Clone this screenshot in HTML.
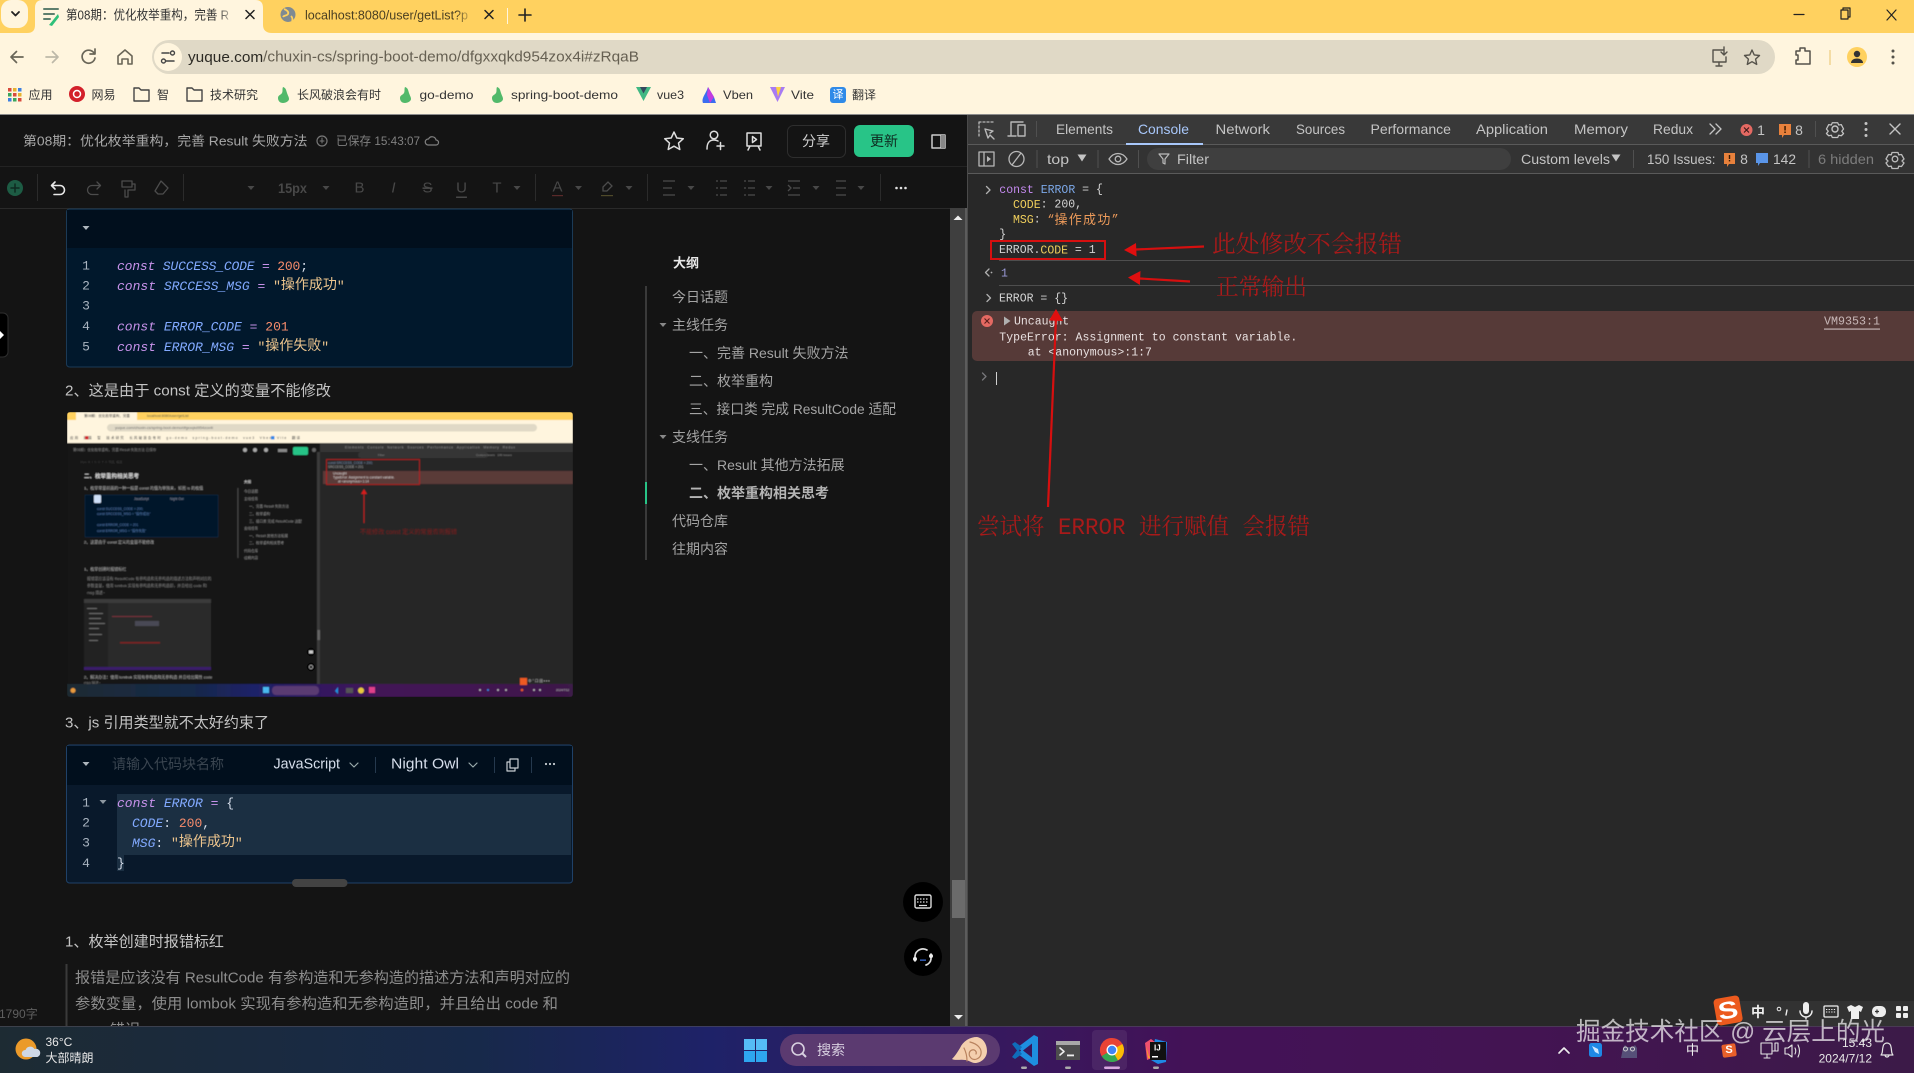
<!DOCTYPE html>
<html><head><meta charset="utf-8"><title>Yuque</title>
<style>
html,body{margin:0;padding:0;background:#141414;overflow:hidden}
svg{display:block;position:absolute;left:0;top:0}
text{dominant-baseline:central;font-family:"Liberation Sans","Noto Sans CJK SC",sans-serif;white-space:pre}
.m text,text.m{font-family:"Liberation Mono","Noto Sans CJK SC",monospace}
.i{fill:none;stroke-linecap:round;stroke-linejoin:round}
.tb{stroke:#4c4c4c;fill:none;stroke-width:1.3}
.k{font-style:italic}
</style></head><body>
<svg width="1914" height="1073" viewBox="0 0 1914 1073" xmlns="http://www.w3.org/2000/svg">
<defs>
<linearGradient id="tbg" x1="0" x2="1" y1="0" y2="0">
<stop offset="0" stop-color="#1d2b33"/><stop offset=".25" stop-color="#17294a"/><stop offset=".37" stop-color="#1e2268"/><stop offset=".46" stop-color="#2e1c62"/><stop offset=".62" stop-color="#431257"/><stop offset=".8" stop-color="#431452"/><stop offset="1" stop-color="#3c1a48"/>
</linearGradient>
<linearGradient id="fade1"><stop offset="0" stop-color="#fff5de" stop-opacity="0"/><stop offset="1" stop-color="#fff5de"/></linearGradient>
<linearGradient id="fade2"><stop offset="0" stop-color="#ffd15f" stop-opacity="0"/><stop offset="1" stop-color="#ffd15f"/></linearGradient>
<filter id="soft" x="0" y="0" width="100%" height="100%"><feGaussianBlur stdDeviation=".4"/></filter>
<path id="c" d="M-3.5 -2h7l-3.500 4z"/>
<path id="c2" d="M-4.500 -3.500h9l-4.500 7z"/>
<clipPath id="mini"><rect x="67" y="412" width="506" height="285" rx="3"/></clipPath>
<clipPath id="left"><rect x="0" y="208" width="950" height="818"/></clipPath>
</defs>

<!-- chrome top -->
<rect width="1914" height="33" fill="#ffd15f"/>
<rect y="33" width="1914" height="82" fill="#fff5de"/>
<rect x="1" y="0" width="27" height="28" rx="10" fill="#fff5de"/>
<path class="i" stroke="#222" stroke-width="1.800" d="M12 12l3.500 3.500 3.500-3.500"/>
<path d="M27 33c6 0 8-3 8-8V8c0-6 3-8 8-8h212c6 0 8 3 8 8v17c0 5 3 8 9 8z" fill="#fff5de"/>
<path class="i" stroke="#5e7f6e" stroke-width="2" d="M44 9h14M44 14h10M44 19h6"/><path d="M49 25l9-11 1 3-7 9z" fill="#2fc07a"/>
<text x="66" y="15" font-size="13" fill="#333" textLength="163" lengthAdjust="spacingAndGlyphs">第08期：优化枚举重构，完善 R</text>
<rect x="218" y="3" width="18" height="26" fill="url(#fade1)"/>
<path class="i" stroke="#222" stroke-width="1.500" d="M246 10.500l8 8M254 10.500l-8 8"/>
<circle cx="288" cy="14.500" r="7.500" fill="#7f8a92"/><path d="M284 9c3 1 5 3 4 5s-4 1-5 3M291 16c1 1 2 3 1 5" stroke="#ffd15f" fill="none" stroke-width="1.800"/>
<text x="305" y="15" font-size="13" fill="#4a3f22" textLength="163" lengthAdjust="spacingAndGlyphs">localhost:8080/user/getList?p</text>
<rect x="456" y="3" width="18" height="26" fill="url(#fade2)"/>
<path class="i" stroke="#222" stroke-width="1.500" d="M485 10.500l8 8M493 10.500l-8 8"/>
<rect x="507" y="8" width="1" height="16" fill="#fff5de"/>
<path class="i" stroke="#222" stroke-width="1.600" d="M525 9v12M519 15h12"/>
<path class="i" stroke="#222" stroke-width="1.200" d="M1794 14.500h10"/>
<path class="i" stroke="#222" stroke-width="1.200" d="M1841 10h7v9h-7zM1843 10V8h7v9h-2"/>
<path class="i" stroke="#222" stroke-width="1.200" d="M1887 10l9 10M1896 10l-9 10"/>

<path class="i" stroke="#6a6658" stroke-width="1.700" d="M23 57H11M16.500 51.500L11 57l5.500 5.500"/>
<path class="i" stroke="#bdb8a8" stroke-width="1.700" d="M46 57h12M52.500 51.500L58 57l-5.500 5.500"/>
<path class="i" stroke="#6a6658" stroke-width="1.700" d="M94 53a6.500 6.500 0 1 0 1 5M95 49v5h-5"/>
<path class="i" stroke="#6a6658" stroke-width="1.600" d="M118 56l7-6 7 6v8h-4v-5h-6v5h-4z"/>
<rect x="152" y="40" width="1623" height="34" rx="17" fill="#e0d9c6"/>
<circle cx="168" cy="57" r="14" fill="#fff5de"/>
<path class="i" stroke="#444" stroke-width="1.500" d="M162 53h7M166 61h8"/><circle cx="172.500" cy="53" r="2" fill="none" stroke="#444" stroke-width="1.400"/><circle cx="163.500" cy="61" r="2" fill="none" stroke="#444" stroke-width="1.400"/>
<text x="188" y="57" font-size="15" fill="#666052" textLength="451" lengthAdjust="spacingAndGlyphs"><tspan fill="#2c2a24">yuque.com</tspan>/chuxin-cs/spring-boot-demo/dfgxxqkd954zox4i#zRqaB</text>
<path class="i" stroke="#55524a" stroke-width="1.400" d="M1723 50h-10v12h13v-5M1716 66h6M1719 62v4M1724 47v8M1721 52l3 3 3-3"/>
<path class="i" stroke="#55524a" stroke-width="1.400" d="M1752 50l2.200 4.900 5.300.6-3.900 3.600 1.100 5.300-4.700-2.700-4.700 2.700 1.100-5.300-3.900-3.600 5.300-.6z"/>
<path class="i" stroke="#55524a" stroke-width="1.500" d="M1796 51h4v-3h5v3h5v13h-14v-4h2v-5h-2z"/>
<rect x="1829.500" y="50" width="1" height="15" fill="#e8c46a"/>
<circle cx="1857" cy="57" r="10" fill="#ffd15f"/><circle cx="1857" cy="54" r="3.200" fill="#333"/><path d="M1851 63c0-6 12-6 12 0z" fill="#333"/>
<g fill="#55524a"><circle cx="1893" cy="51" r="1.500"/><circle cx="1893" cy="57" r="1.500"/><circle cx="1893" cy="63" r="1.500"/></g>

<!-- bookmarks -->
<g font-size="12" fill="#333">
<g><rect x="8" y="88" width="3.500" height="3.500" fill="#d84a3c"/><rect x="13" y="88" width="3.500" height="3.500" fill="#e6b12e"/><rect x="18" y="88" width="3.500" height="3.500" fill="#3c7fe0"/><rect x="8" y="93" width="3.500" height="3.500" fill="#3ba55c"/><rect x="13" y="93" width="3.500" height="3.500" fill="#d84a3c"/><rect x="18" y="93" width="3.500" height="3.500" fill="#e6b12e"/><rect x="8" y="98" width="3.500" height="3.500" fill="#3c7fe0"/><rect x="13" y="98" width="3.500" height="3.500" fill="#3ba55c"/><rect x="18" y="98" width="3.500" height="3.500" fill="#d84a3c"/></g>
<text x="28.500" y="95">应用</text>
<circle cx="77" cy="94" r="8" fill="#d3202a"/><circle cx="77" cy="94" r="3.500" fill="none" stroke="#fff" stroke-width="1.500"/>
<text x="91.500" y="95">网易</text>
<path class="i" stroke="#444" stroke-width="1.400" d="M134 88h5l2 2h8v11h-15z"/>
<text x="157" y="95">智</text>
<path class="i" stroke="#444" stroke-width="1.400" d="M187 88h5l2 2h8v11h-15z"/>
<text x="210" y="95">技术研究</text>
<path d="M283 87c3 1 3 3 4 6s2 4 2 6-3 4-6 4-5-2-5-5 3-3 4-5 0-4 1-6z" fill="#52b96a"/>
<text x="297" y="95">长风破浪会有时</text>
<path d="M405 87c3 1 3 3 4 6s2 4 2 6-3 4-6 4-5-2-5-5 3-3 4-5 0-4 1-6z" fill="#52b96a"/>
<text x="419.500" y="95" textLength="54" lengthAdjust="spacingAndGlyphs">go-demo</text>
<path d="M497 87c3 1 3 3 4 6s2 4 2 6-3 4-6 4-5-2-5-5 3-3 4-5 0-4 1-6z" fill="#52b96a"/>
<text x="511" y="95" textLength="107" lengthAdjust="spacingAndGlyphs">spring-boot-demo</text>
<path d="M636 87h15l-7.500 14z" fill="#41b883"/><path d="M640 87h7l-3.500 6.500z" fill="#35495e"/>
<text x="657" y="95" textLength="27" lengthAdjust="spacingAndGlyphs">vue3</text>
<path d="M708 87l6 10 2 6h-13c-2-5 3-9 5-16z" fill="#3b6cf0"/><path d="M708 87l6 10-4 6-3-8z" fill="#c23be0"/>
<text x="723" y="95" textLength="30" lengthAdjust="spacingAndGlyphs">Vben</text>
<path d="M770 87h15l-7.500 15z" fill="#a77bf3"/><path d="M776 87h5l-3 10z" fill="#ffd33d"/>
<text x="791" y="95" textLength="23" lengthAdjust="spacingAndGlyphs">Vite</text>
<rect x="830" y="87" width="16" height="16" rx="3" fill="#2f8ae8"/><text x="838" y="95" font-size="11" fill="#fff" text-anchor="middle">译</text>
<text x="852" y="95">翻译</text>
</g>
<rect y="114" width="1914" height="1" fill="#8c8c8c"/>

<!-- left pane -->
<rect y="115" width="967" height="911" fill="#141414"/>
<text x="23" y="141" font-size="13" fill="#a8a8a8" textLength="284.500" lengthAdjust="spacingAndGlyphs">第08期：优化枚举重构，完善 Result 失败方法</text>
<circle cx="322" cy="141" r="5" class="i" stroke="#777" stroke-width="1.200"/><path class="i" stroke="#777" d="M320 141h4M322 138v5"/>
<text x="336" y="141" font-size="12" fill="#808080" textLength="84" lengthAdjust="spacingAndGlyphs">已保存 15:43:07</text>
<path class="i" stroke="#808080" stroke-width="1.200" d="M428 145h8a2.500 2.500 0 0 0 0-5 4 4 0 0 0-7.500-1 3 3 0 0 0-.5 6z"/>
<path class="i" stroke="#ddd" stroke-width="1.500" d="M674 132l2.800 6 6.500.7-4.800 4.400 1.300 6.400-5.800-3.300-5.800 3.300 1.300-6.400-4.800-4.400 6.500-.7z"/>
<circle cx="714" cy="135" r="3.800" class="i" stroke="#ddd" stroke-width="1.500"/><path class="i" stroke="#ddd" stroke-width="1.500" d="M707 149c0-6 2-9 7-9 2 0 3 .5 4 1M717 146h7M720.500 142.500v7"/>
<path class="i" stroke="#ddd" stroke-width="1.500" d="M747 133h14v13h-14zM750 146l-2 4M758 146l2 4M752.500 136.500l4 3-4 3z"/>
<rect x="787.500" y="125.500" width="58" height="32" rx="6" fill="none" stroke="#2e2e2e"/>
<text x="816" y="141" font-size="14" fill="#d0d0d0" text-anchor="middle">分享</text>
<rect x="854" y="125" width="60" height="32" rx="6" fill="#28c487"/>
<text x="884" y="141" font-size="14" fill="#0e2a20" text-anchor="middle">更新</text>
<path class="i" stroke="#ccc" stroke-width="1.500" d="M932 135h13v13h-13zM941 135v13"/><rect x="941" y="135" width="4" height="13" fill="#888"/>
<rect y="166" width="967" height="1" fill="#232323"/>
<circle cx="15" cy="188" r="8" fill="#1d5c44"/><path class="i" stroke="#0e2a20" stroke-width="1.500" d="M15 184v8M11 188h8"/>
<g fill="#2b2b2b"><rect x="37" y="174" width="1" height="27"/><rect x="183" y="174" width="1" height="27"/><rect x="535" y="174" width="1" height="27"/><rect x="647" y="174" width="1" height="27"/><rect x="880" y="174" width="1" height="27"/></g>
<path class="i" stroke="#e8e8e8" stroke-width="1.600" d="M55 182l-3.500 3.500 3.500 3.500M52 185.500h8a4.500 4.500 0 0 1 0 9h-6"/>
<path class="i tb" d="M97 182l3.500 3.500-3.500 3.500M100 185.500h-8a4.500 4.500 0 0 0 0 9h6"/>
<path class="i tb" d="M122 181h10v6h-10zM132 184h3v6h-7v7h-3v-7"/>
<path class="i tb" d="M161 181l7 7-5 6h-5l-3-3z"/>
<g fill="#484848">
<use href="#c" x="251" y="188"/><use href="#c" x="326" y="188"/><use href="#c" x="517" y="188"/><use href="#c" x="578.500" y="188"/><use href="#c" x="629" y="188"/><use href="#c" x="691" y="188"/><use href="#c" x="769" y="188"/><use href="#c" x="816" y="188"/><use href="#c" x="861" y="188"/>
<text x="292.500" y="188" font-size="14" font-weight="bold" text-anchor="middle" textLength="29" lengthAdjust="spacingAndGlyphs">15px</text>
<text x="359.500" y="188" font-size="15" text-anchor="middle">B</text>
<text x="393.500" y="188" font-size="15" font-style="italic" text-anchor="middle">I</text>
<text x="427.500" y="188" font-size="15" text-anchor="middle" text-decoration="line-through">S</text>
<text x="461.500" y="188" font-size="15" text-anchor="middle" text-decoration="underline">U</text>
<text x="497" y="188" font-size="15" text-anchor="middle">T</text>
<text x="557.500" y="187" font-size="15" text-anchor="middle">A</text><rect x="552" y="195" width="11" height="1.200" fill="#5a2a2a"/>
<path class="tb" d="M603 187l5-5 4 4-5 5h-4z"/><rect x="601" y="195" width="12" height="1.200" fill="#4f4a2a"/>
</g>
<path class="tb" d="M663 181h12M663 188h9M663 195h12M716 181h2M720 181h7M716 188h2M720 188h7M716 195h2M720 195h7M744 181h2M748 181h7M744 188h2M748 188h7M744 195h2M748 195h7M788 181h12M793 188h7M788 195h12M788 185l3 3-3 3M836 181h10M836 188h10M836 195h10"/>
<g fill="#e0e0e0"><circle cx="896.500" cy="188" r="1.300"/><circle cx="901" cy="188" r="1.300"/><circle cx="905.500" cy="188" r="1.300"/></g>
<rect y="208" width="950" height="1" fill="#2a2a2a"/>

<g clip-path="url(#left)">
<!-- code block 1 -->
<rect x="66.500" y="209" width="506" height="158" rx="3" fill="#01182c" stroke="#1b3a56"/>
<rect x="67" y="210" width="505" height="38" fill="#010f1d"/>
<use href="#c" x="86" y="228" fill="#aeb6bd"/>
<g class="m" font-size="13">
<g fill="#a9b4c0" font-size="13"><text x="86" y="266" text-anchor="middle">1</text><text x="86" y="286" text-anchor="middle">2</text><text x="86" y="306" text-anchor="middle">3</text><text x="86" y="326.500" text-anchor="middle">4</text><text x="86" y="347" text-anchor="middle">5</text></g>
<text x="117" y="266" textLength="191"><tspan class="k" fill="#c792ea">const</tspan> <tspan class="k" fill="#82aaff">SUCCESS_CODE</tspan> <tspan fill="#c792ea">=</tspan> <tspan fill="#f78c6c">200</tspan><tspan fill="#d6deeb">;</tspan></text>
<text x="117" y="286"><tspan class="k" fill="#c792ea">const</tspan> <tspan class="k" fill="#82aaff">SRCCESS_MSG</tspan> <tspan fill="#c792ea">=</tspan> <tspan fill="#ecc48d">"<tspan font-size="14">操作成功</tspan>"</tspan></text>
<text x="117" y="326.500"><tspan class="k" fill="#c792ea">const</tspan> <tspan class="k" fill="#82aaff">ERROR_CODE</tspan> <tspan fill="#c792ea">=</tspan> <tspan fill="#f78c6c">201</tspan></text>
<text x="117" y="347"><tspan class="k" fill="#c792ea">const</tspan> <tspan class="k" fill="#82aaff">ERROR_MSG</tspan> <tspan fill="#c792ea">=</tspan> <tspan fill="#ecc48d">"<tspan font-size="14">操作失败</tspan>"</tspan></text>
</g>
<text x="65" y="391" font-size="15" fill="#c4c4c4" textLength="266" lengthAdjust="spacingAndGlyphs">2、这是由于 const 定义的变量不能修改</text>

<!-- nested screenshot -->
<g clip-path="url(#mini)"><g filter="url(#soft)">
<rect x="67" y="412" width="506" height="285" fill="#141414"/>
<rect x="320" y="443" width="253" height="241" fill="#282828"/>
<rect x="67" y="412" width="506" height="8" fill="#ffd15f"/>
<rect x="67" y="420" width="506" height="23" fill="#fff5de"/>
<rect x="76" y="412" width="61" height="8" fill="#fff5de"/>
<text x="84" y="416" font-size="3.500" fill="#333">第08期：优化枚举重构，完善</text>
<text x="147" y="416" font-size="3.500" fill="#554">localhost:8080/user/getList</text>
<rect x="107" y="424" width="430" height="7.500" rx="3.700" fill="#e0d9c6"/>
<text x="115" y="428" font-size="3.800" fill="#666">yuque.com/chuxin-cs/spring-boot-demo/dfgxxqkd954zox4i</text>
<text x="70" y="438" font-size="3.500" fill="#444" textLength="230" lengthAdjust="spacing">应用  网易  智  技术研究  长风破浪会有时  go-demo  spring-boot-demo  vue3  Vben  Vite  翻译</text>
<rect x="85" y="436" width="3.500" height="3.500" fill="#d3202a"/><rect x="271" y="436" width="3.500" height="3.500" fill="#2f8ae8"/>
<text x="73" y="450" font-size="3.500" fill="#8a8a8a">第08期：优化枚举重构，完善 Result 失败方法 已保存</text>
<rect x="293" y="447" width="15" height="8" rx="1.500" fill="#28c487"/>
<rect x="278" y="449" width="9" height="3" fill="#888"/>
<circle cx="245" cy="450" r="2" fill="#aaa"/><circle cx="255" cy="450" r="2" fill="#aaa"/><circle cx="266" cy="450" r="2" fill="#aaa"/><circle cx="314" cy="450" r="2" fill="#666"/>
<text x="80" y="462" font-size="3" fill="#444">15px  B  I  S  U  T  A  列表  缩进</text>
<rect x="320" y="443" width="253" height="9" fill="#363636"/>
<text x="345" y="447.500" font-size="3.400" fill="#8f8f8f" textLength="170" lengthAdjust="spacing">Elements  Console  Network  Sources  Performance  Application  Memory  Redux</text>
<rect x="358" y="452" width="130" height="6" rx="3" fill="#353535"/>
<text x="378" y="455" font-size="3" fill="#888">Filter</text>
<text x="476" y="455" font-size="3" fill="#888">Custom levels   149 Issues</text>
<rect x="323" y="471" width="250" height="13" fill="#5a3b38"/>
<text x="328" y="463" font-size="3.200" fill="#7a8fb0">const SRCCESS_CODE = 200;</text>
<text x="328" y="467" font-size="3.200" fill="#aaa">SRCCESS_CODE = 201</text>
<text x="333" y="473.500" font-size="3.200" fill="#ddd">Uncaught</text>
<text x="333" y="477.500" font-size="3.200" fill="#ddd">TypeError: Assignment to constant variable.</text>
<text x="338" y="481.500" font-size="3.200" fill="#ddd">at &lt;anonymous&gt;:1:14</text>
<rect x="326.500" y="459.500" width="93" height="25" fill="none" stroke="#c41818" stroke-width=".8"/>
<path d="M364 523V491" stroke="#b81c1c" fill="none"/><path d="M361 494l3-5 3 5z" fill="#d81c1c"/>
<text x="360" y="533" font-size="6" fill="#7c1a1a" textLength="97" lengthAdjust="spacingAndGlyphs">不能修改 const 定义的常量否则报错</text>
<text x="84" y="477" font-size="5.500" font-weight="bold" fill="#ddd">二、枚举重构相关思考</text>
<text x="84" y="488" font-size="4" fill="#bbb">1、枚举常量前面的一种一般是 const 的值为单独来，如图 is 的枚值</text>
<rect x="85" y="495" width="133" height="42" fill="#01182c" stroke="#12304a" stroke-width=".6"/>
<text x="134" y="499" font-size="3.200" fill="#99a">JavaScript</text><text x="170" y="499" font-size="3.200" fill="#99a">Night Owl</text>
<rect x="94" y="495" width="7" height="8" rx="1" fill="#cfe0f8"/>
<g font-size="3.300" fill="#5a7fb8"><text x="97" y="509">const SUCCESS_CODE = 200;</text><text x="97" y="514">const SRCCESS_MSG = "操作成功"</text><text x="97" y="525">const ERROR_CODE = 201</text><text x="97" y="531">const ERROR_MSG = "操作失败"</text></g>
<text x="84" y="542" font-size="4" fill="#bbb">2、这是由于 const 定义的变量不能修改</text>
<rect x="237.500" y="488" width=".8" height="70" fill="#555"/>
<g font-size="3.500" fill="#999"><text x="244" y="482" fill="#ccc" font-weight="bold">大纲</text><text x="244" y="491.500">今日话题</text><text x="244" y="499">主线任务</text><text x="249" y="506.500">一、完善 Result 失败方法</text><text x="249" y="514">二、枚举重构</text><text x="249" y="521.500">三、接口类 完成 ResultCode 适配</text><text x="244" y="528.500">支线任务</text><text x="249" y="536">一、Result 其他方法拓展</text><text x="249" y="543">二、枚举重构相关思考</text><text x="244" y="551">代码仓库</text><text x="244" y="558">往期内容</text></g>
<text x="84" y="569" font-size="4" fill="#bbb">1、枚举创建时报错标红</text>
<g font-size="3.800" fill="#888"><text x="87" y="579">报错是应该没有 ResultCode 有参构造和无参构造的描述方法和声明对应的</text><text x="87" y="586">参数变量，使用 lombok 实现有参构造和无参构造即，并且给出 code 和</text><text x="87" y="593">msg 描述~</text></g>
<rect x="84" y="599" width="127" height="71" fill="#2b2b2b"/>
<rect x="84" y="599" width="127" height="4" fill="#3a3a3a"/>
<rect x="84" y="603" width="24" height="64" fill="#232323"/>
<g fill="#6a6a6a"><rect x="87" y="608" width="10" height="1"/><rect x="89" y="613" width="14" height="1"/><rect x="89" y="618" width="12" height="1"/><rect x="89" y="623" width="16" height="1"/><rect x="89" y="628" width="10" height="1"/><rect x="89" y="634" width="13" height="1"/><rect x="89" y="640" width="9" height="1"/></g>
<rect x="135" y="621" width="24" height="5" fill="#4a4a55"/>
<rect x="112" y="616" width="40" height="1" fill="#77333a"/>
<rect x="120" y="642" width="40" height="1.500" fill="#7a2020"/>
<rect x="84" y="667" width="127" height="3" fill="#3a1a6a"/>
<text x="84" y="677" font-size="4" fill="#bbb">2、解决办法：使用 lombok 实现有参构造和无参构造 并且给出属性 code</text>
<text x="84" y="683" font-size="3.500" fill="#888">msg 描述~</text>
<rect x="317" y="452" width="3" height="232" fill="#3a3a3a"/>
<rect x="317.500" y="630" width="2.500" height="10" fill="#666"/>
<circle cx="311" cy="652" r="4" fill="#000"/><rect x="309" y="650.500" width="4" height="3" fill="#ccc"/>
<circle cx="311" cy="667" r="4" fill="#000"/><circle cx="311" cy="667" r="1.800" fill="none" stroke="#ccc" stroke-width=".6"/>
<rect x="67" y="684" width="506" height="13" fill="url(#tbg)"/>
<circle cx="73" cy="690.500" r="2.500" fill="#e89a3c"/>
<rect x="263" y="687" width="6" height="6" fill="#4ab8f0"/>
<rect x="272" y="686" width="47" height="9" rx="4" fill="#5a3a72"/>
<path d="M338 687l-3 4 3 3z" fill="#1e8fe0"/><rect x="346" y="688" width="7" height="5" fill="#555"/><circle cx="361" cy="690.500" r="3" fill="#e8c93c"/><rect x="369" y="687" width="6" height="6" fill="#e0408a"/>
<rect x="520" y="678" width="7" height="7" fill="#ee5a22"/>
<text x="528" y="681" font-size="3.500" fill="#ccc">中 ° 口 田 ▪ ▪ ▪</text>
<text x="556" y="690" font-size="3" fill="#bbb">2024/7/12</text>
<g fill="#bbb"><circle cx="480" cy="690" r="1"/><circle cx="488" cy="690" r="1" fill="#2f8ae8"/><circle cx="498" cy="690" r="1"/><circle cx="506" cy="690" r="1"/><circle cx="522" cy="690" r="1.300" fill="#ee5a22"/><circle cx="534" cy="690" r="1"/><circle cx="540" cy="690" r="1"/></g>
</g></g>

<text x="65" y="723" font-size="15" fill="#c4c4c4" textLength="204" lengthAdjust="spacingAndGlyphs">3、js 引用类型就不太好约束了</text>
<!-- code block 2 -->
<rect x="66.500" y="745" width="506" height="138" rx="3" fill="#09192b" stroke="#1f4168"/>
<rect x="67" y="746" width="505" height="39" fill="#010f1d"/>
<use href="#c" x="86" y="764" fill="#aeb6bd"/>
<text x="112" y="764" font-size="14" fill="#3a4550">请输入代码块名称</text>
<text x="273.500" y="764" font-size="15" fill="#d6deeb" textLength="66.500" lengthAdjust="spacingAndGlyphs">JavaScript</text>
<path class="i" stroke="#9aa" stroke-width="1.200" d="M350 763l4 4 4-4M469 763l4 4 4-4"/>
<rect x="375" y="757" width="1" height="16" fill="#25394e"/><rect x="494" y="757" width="1" height="16" fill="#25394e"/><rect x="531" y="757" width="1" height="16" fill="#25394e"/>
<text x="391" y="764" font-size="15" fill="#d6deeb" textLength="68" lengthAdjust="spacingAndGlyphs">Night Owl</text>
<path class="i" stroke="#c8cdd2" stroke-width="1.200" d="M510 762h-3v9h8v-3M510 759h8v9h-8z"/>
<g fill="#c8cdd2"><circle cx="546" cy="764" r="1.100"/><circle cx="550" cy="764" r="1.100"/><circle cx="554" cy="764" r="1.100"/></g>
<rect x="117" y="794" width="454" height="61" fill="#1b2f42"/>
<rect x="117" y="855" width="7" height="16" fill="#1b2f42"/>
<g class="m" font-size="13">
<g fill="#a9b4c0"><text x="86" y="803" text-anchor="middle">1</text><text x="86" y="823" text-anchor="middle">2</text><text x="86" y="843" text-anchor="middle">3</text><text x="86" y="863.500" text-anchor="middle">4</text></g>
<text x="117" y="803"><tspan class="k" fill="#c792ea">const</tspan> <tspan class="k" fill="#82aaff">ERROR</tspan> <tspan fill="#c792ea">=</tspan> <tspan fill="#d6deeb">{</tspan></text>
<text x="132" y="823"><tspan class="k" fill="#82aaff">CODE</tspan><tspan fill="#d6deeb">:</tspan> <tspan fill="#f78c6c">200</tspan><tspan fill="#d6deeb">,</tspan></text>
<text x="132" y="843"><tspan class="k" fill="#82aaff">MSG</tspan><tspan fill="#d6deeb">:</tspan> <tspan fill="#ecc48d">"<tspan font-size="14">操作成功</tspan>"</tspan></text>
<text x="117" y="863.500" fill="#d6deeb">}</text>
</g>
<use href="#c" x="103" y="802" fill="#8d97a0"/>
<rect x="292" y="879" width="55.500" height="8" rx="4" fill="#434343"/>

<text x="65" y="942" font-size="15" fill="#c4c4c4" textLength="159" lengthAdjust="spacingAndGlyphs">1、枚举创建时报错标红</text>
<rect x="65.500" y="964" width="2" height="64" fill="#3a3a3a"/>
<text x="75" y="978" font-size="15" fill="#8d8d8d" textLength="495" lengthAdjust="spacingAndGlyphs">报错是应该没有 ResultCode 有参构造和无参构造的描述方法和声明对应的</text>
<text x="75" y="1004" font-size="15" fill="#8d8d8d" textLength="483" lengthAdjust="spacingAndGlyphs">参数变量，使用 lombok 实现有参构造和无参构造即，并且给出 code 和</text>
<text x="110" y="1030" font-size="15" fill="#8d8d8d">错误</text>
<text x="-1" y="1014" font-size="12" fill="#5f5f5f">1790字</text>

<!-- outline -->
<text x="673" y="263" font-size="13" font-weight="bold" fill="#e8e8e8">大纲</text>
<rect x="645" y="286" width="2" height="274" fill="#3a3a3a"/>
<rect x="645" y="482" width="2" height="22" fill="#28c487"/>
<g font-size="14" fill="#a4a4a4">
<text x="672" y="297">今日话题</text>
<use href="#c" x="663" y="325" fill="#888"/><text x="672" y="325">主线任务</text>
<text x="689" y="353">一、完善 Result 失败方法</text>
<text x="689" y="381">二、枚举重构</text>
<text x="689" y="409" textLength="207" lengthAdjust="spacingAndGlyphs">三、接口类 完成 ResultCode 适配</text>
<use href="#c" x="663" y="437" fill="#888"/><text x="672" y="437">支线任务</text>
<text x="689" y="465">一、Result 其他方法拓展</text>
<text x="689" y="493" font-weight="bold" fill="#b4b4b4">二、枚举重构相关思考</text>
<text x="672" y="521">代码仓库</text>
<text x="672" y="549">往期内容</text>
</g>
<!-- floating -->
<rect x="-6" y="313" width="14" height="44" rx="5" fill="#000" stroke="#2e2e2e"/>
<path d="M0 331l4 4-4 4z" fill="#fff"/>
<circle cx="923" cy="902" r="20" fill="#000"/>
<rect x="915" y="895" width="16" height="13" rx="1.500" fill="none" stroke="#ddd" stroke-width="1.400"/><path stroke="#ddd" stroke-width="1.200" stroke-dasharray="1.500 1.500" d="M917 899h12M917 902h12"/><path stroke="#ddd" stroke-width="1.200" d="M919 905.500h8"/>
<circle cx="923" cy="957" r="19" fill="#000"/>
<path class="i" stroke="#ddd" stroke-width="1.700" d="M915 961v-5a8 8 0 0 1 12-6M931 954v5a7 7 0 0 1-5 6"/><circle cx="915" cy="959" r="2" fill="#eee"/><circle cx="931" cy="956" r="2" fill="#eee"/><rect x="920" y="959.500" width="6" height="1.300" fill="#3a6ad0"/>
</g>
<!-- scrollbar -->
<rect x="950" y="208" width="15" height="818" fill="#3f3f3f"/>
<rect x="965" y="208" width="2" height="818" fill="#5c5c5c"/>
<rect x="952" y="880" width="13" height="38" fill="#6b6b6b"/>
<path d="M958 215.500l4.500 4.500h-9z" fill="#eee"/><path d="M954 1015h9l-4.500 4.500z" fill="#eee"/>

<!-- devtools -->
<rect x="967" y="115" width="947" height="911" fill="#282828"/>
<rect x="967" y="115" width="947" height="29" fill="#393939"/>
<rect x="967" y="145" width="947" height="28" fill="#333"/>
<rect x="967" y="144" width="947" height="1" fill="#5a5a5a"/>
<rect x="967" y="173" width="947" height="1" fill="#5a5a5a"/>
<rect x="967" y="115" width="1" height="911" fill="#4a4a4a"/>
<path class="i" stroke="#b8b8b8" stroke-width="1.300" stroke-dasharray="2 2" d="M979 122h14M979 122v14"/><path class="i" stroke="#b8b8b8" stroke-width="1.400" d="M985 129l3 9 2-3 4 4M985 129l8 2-3 2"/>
<path class="i" stroke="#b8b8b8" stroke-width="1.400" d="M1011 136v-14h12M1008 136h8M1018 125h7v11h-7z"/>
<rect x="1036" y="121" width="1" height="16" fill="#505050"/>
<g font-size="14" fill="#c4c4c4">
<text x="1056" y="129" textLength="57" lengthAdjust="spacingAndGlyphs">Elements</text>
<text x="1138" y="129" textLength="51" lengthAdjust="spacingAndGlyphs" fill="#a8c7fa">Console</text>
<text x="1215.500" y="129" textLength="54.500" lengthAdjust="spacingAndGlyphs">Network</text>
<text x="1296" y="129" textLength="49" lengthAdjust="spacingAndGlyphs">Sources</text>
<text x="1370.500" y="129" textLength="80.500" lengthAdjust="spacingAndGlyphs">Performance</text>
<text x="1476" y="129" textLength="72" lengthAdjust="spacingAndGlyphs">Application</text>
<text x="1574" y="129" textLength="54" lengthAdjust="spacingAndGlyphs">Memory</text>
<text x="1653" y="129" textLength="40" lengthAdjust="spacingAndGlyphs">Redux</text>
<text x="1761" y="130" text-anchor="middle">1</text><text x="1799" y="130" text-anchor="middle">8</text>
</g>
<rect x="1126" y="143" width="77" height="2" fill="#a8c7fa"/>
<path class="i" stroke="#c4c4c4" stroke-width="1.300" d="M1710 124l5 5-5 5M1716 124l5 5-5 5"/>
<circle cx="1746.500" cy="130" r="6" fill="#e46962"/><path stroke="#3a1a1a" stroke-width="1.100" d="M1744 127.500l5 5M1749 127.500l-5 5"/>
<path d="M1779 124h12v11h-7l-2 3v-3h-3z" fill="#e8813c"/><rect x="1784.300" y="126" width="1.500" height="4.500" fill="#3a1a00"/><rect x="1784.300" y="131.500" width="1.500" height="1.500" fill="#3a1a00"/>
<rect x="1815" y="121" width="1" height="16" fill="#505050"/>
<circle cx="1835" cy="129" r="3" class="i" stroke="#c4c4c4" stroke-width="1.400"/><path class="i" stroke="#c4c4c4" stroke-width="1.400" d="M1832 122h6l1 2.500 3-.3 2.500 4.800-2 2.500 0 0 2 2.500-2.500 2.500-3-.5-1 2.500h-6l-1-2.500-3 .5-2.500-2.500 2-2.500-2-2.500 2.500-4.800 3 .3z" transform="translate(1835 129) scale(.9) translate(-1835 -129)"/>
<g fill="#c4c4c4"><circle cx="1866" cy="123.500" r="1.500"/><circle cx="1866" cy="129.500" r="1.500"/><circle cx="1866" cy="135.500" r="1.500"/></g>
<path class="i" stroke="#c4c4c4" stroke-width="1.400" d="M1890 124l10 10M1900 124l-10 10"/>

<path class="i" stroke="#b8b8b8" stroke-width="1.300" d="M979 152h15v14h-15zM984 152v14"/><path d="M987 156l4 3-4 3z" fill="#b8b8b8"/>
<circle cx="1016.500" cy="159" r="7.500" class="i" stroke="#b8b8b8" stroke-width="1.300"/><path stroke="#b8b8b8" stroke-width="1.300" d="M1012 165l9-12"/>
<g fill="#505050"><rect x="1036.500" y="150" width="1" height="18"/><rect x="1097.500" y="150" width="1" height="18"/><rect x="1138" y="150" width="1" height="18"/><rect x="1633" y="150" width="1" height="18"/><rect x="1808.500" y="150" width="1" height="18"/></g>
<g font-size="14" fill="#c4c4c4">
<text x="1047" y="159" textLength="22" lengthAdjust="spacingAndGlyphs">top</text>
<use href="#c2" x="1082" y="158" fill="#c4c4c4"/>
<rect x="1147" y="148" width="364" height="22" rx="11" fill="#3f3f3f"/>
<text x="1177" y="159" textLength="32" lengthAdjust="spacingAndGlyphs" fill="#c4c4c4">Filter</text>
<text x="1521" y="159" textLength="89" lengthAdjust="spacingAndGlyphs">Custom levels</text>
<use href="#c2" x="1616" y="158" fill="#c4c4c4"/>
<text x="1647" y="159" textLength="68.500" lengthAdjust="spacingAndGlyphs">150 Issues:</text>
<text x="1744" y="159" text-anchor="middle">8</text>
<text x="1773" y="159" textLength="23" lengthAdjust="spacingAndGlyphs">142</text>
<text x="1818" y="159" textLength="56" lengthAdjust="spacingAndGlyphs" fill="#7c7c7c">6 hidden</text>
</g>
<path class="i" stroke="#b8b8b8" stroke-width="1.300" d="M1118 153.500c5 0 8 4 9 5.500-1 1.500-4 5.500-9 5.500s-8-4-9-5.500c1-1.500 4-5.500 9-5.500z"/><circle cx="1118" cy="159" r="2.800" fill="none" stroke="#b8b8b8" stroke-width="1.300"/>
<path class="i" stroke="#bbb" stroke-width="1.200" d="M1159 154h10l-4 5v5l-2-1v-4z"/>
<path d="M1724 153h11v11h-6l-2 3v-3h-3z" fill="#e8813c"/><rect x="1728.800" y="155" width="1.400" height="4" fill="#3a1a00"/><rect x="1728.800" y="160" width="1.400" height="1.400" fill="#3a1a00"/>
<path d="M1756 153h12v10h-8l-2 3v-3h-2z" fill="#5a95e8"/>
<circle cx="1895" cy="159" r="2.800" class="i" stroke="#bbb" stroke-width="1.300"/><path class="i" stroke="#bbb" stroke-width="1.300" d="M1892 152.500h6l.7 2.300 2.800-.3 2.500 4.500-2 2 2 2-2.500 3.500-2.800-.3-.7 2.300h-6l-.7-2.300-2.800.3-2.500-3.500 2-2-2-2 2.500-4.500 2.800.3z"/>

<!-- console text -->
<g class="m" font-size="11.500" fill="#d4d4d4">
<path class="i" stroke="#b0b0b0" stroke-width="1.300" d="M986.500 186.500l3.500 3.500-3.500 3.500M987 294.500l3.500 3.500-3.500 3.500"/>
<text x="999.300" y="190"><tspan fill="#c58af0">const</tspan> <tspan fill="#7ca8e8">ERROR</tspan> = {</text>
<text x="1013" y="205"><tspan fill="#f0cf5c">CODE</tspan>: 200,</text>
<text x="1013" y="220"><tspan fill="#f0cf5c">MSG</tspan>: <tspan fill="#ec9a5a">“<tspan font-size="13" letter-spacing="1.300">操作成功</tspan>”</tspan></text>
<text x="999.300" y="235">}</text>
<text x="999" y="250.500">ERROR.<tspan fill="#f0cf5c">CODE</tspan> = 1</text>
<rect x="999" y="260" width="915" height="1" fill="#4e4e4e"/>
<path class="i" stroke="#b0b0b0" stroke-width="1.300" d="M989 269l-3.500 3.500 3.500 3.500"/><circle cx="991.500" cy="272.500" r=".9" fill="#b0b0b0"/>
<text x="1001" y="274" fill="#9a9ad8">1</text>
<rect x="999" y="285" width="915" height="1" fill="#4e4e4e"/>
<text x="999" y="299">ERROR = {}</text>
<rect x="972" y="311" width="950" height="50" rx="5" fill="#563a38"/>
<circle cx="987" cy="321" r="6" fill="#e46962"/><path stroke="#5a1f1c" stroke-width="1.100" d="M984.500 318.500l5 5M989.500 318.500l-5 5"/>
<path d="M1004 316.500l6.500 4.500-6.500 4.500z" fill="#b0b0b0"/>
<text x="1014" y="322" fill="#e8e0e0">Uncaught</text>
<text x="999.300" y="338" fill="#e8e0e0" textLength="298">TypeError: Assignment to constant variable.</text>
<text x="1027.700" y="353" fill="#e8e0e0">at &lt;anonymous&gt;:1:7</text>
<text x="1824" y="322" fill="#c8b8b8" text-decoration="underline" textLength="56" lengthAdjust="spacingAndGlyphs">VM9353:1</text>
<path class="i" stroke="#77777a" stroke-width="1.300" d="M982.500 373l3.500 3.500-3.500 3.500"/>
<rect x="996" y="372" width="1" height="13" fill="#d0d0d0"/>
</g>

<!-- annotations -->
<rect x="991" y="241" width="114" height="18" fill="none" stroke="#d60f0f" stroke-width="2"/>
<path d="M1204 246.500L1136 249.500" stroke="#d60f0f" stroke-width="2.200" fill="none"/><path d="M1124 250l12-7 .6 13.500z" fill="#e00f0f"/>
<path d="M1190 281.500L1140 278.500" stroke="#d60f0f" stroke-width="2.200" fill="none"/><path d="M1128 277.500l12.500-6.500-.6 14z" fill="#e00f0f"/>
<path d="M1048 507L1056 318" stroke="#d60f0f" stroke-width="2.200" fill="none"/><path d="M1056 309l7 12-14-.5z" fill="#e00f0f"/>
<g fill="#a81a1a">
<text x="1212" y="242" font-size="23.500" style="font-family:'Noto Serif CJK SC',serif" textLength="190" lengthAdjust="spacingAndGlyphs">此处修改不会报错</text>
<text x="1216" y="285" font-size="23" style="font-family:'Noto Serif CJK SC',serif" textLength="91" lengthAdjust="spacingAndGlyphs">正常输出</text>
<text x="977" y="528" font-size="23" style="font-family:'Liberation Mono','Noto Serif CJK SC',serif" textLength="333" lengthAdjust="spacingAndGlyphs">尝试将 ERROR 进行赋值 会报错</text>
</g>

<!-- taskbar -->
<rect y="1026" width="1914" height="47" fill="url(#tbg)"/>
<rect y="1026" width="1914" height="1" fill="#52505c" opacity=".6"/>
<circle cx="26" cy="1049" r="10.500" fill="#eb9a2a"/><path d="M25 1057a3.500 3.500 0 0 1 .5-7 5 5 0 0 1 9-1 4 4 0 0 1 3 8z" fill="#cfd8e6"/>
<text x="45.500" y="1042" font-size="12" fill="#e8e8e8">36°C</text>
<text x="45.500" y="1058" font-size="12" fill="#e8e8e8">大部晴朗</text>
<g fill="#55bcf5"><rect x="744" y="1039" width="11" height="11"/><rect x="756" y="1039" width="11" height="11"/><rect x="744" y="1051" width="11" height="11" fill="#2ea6ef"/><rect x="756" y="1051" width="11" height="11" fill="#2ea6ef"/></g>
<rect x="780" y="1034" width="220" height="32" rx="16" fill="#5b3a70"/>
<circle cx="798" cy="1049" r="6" fill="none" stroke="#d8d0e0" stroke-width="1.600"/><path stroke="#d8d0e0" stroke-width="2" d="M802.500 1053.500l3.500 3.500"/>
<text x="817" y="1050" font-size="14" fill="#d8d0e0">搜索</text>
<path d="M952 1059c3-3 5-6 8-11 3-7 10-11 17-11 6 1 10 7 10 14 0 7-6 12-12 12-4 0-6-3-10-3-5-1-9 1-13-1z" fill="#f4cfae"/><path class="i" stroke="#b9835f" stroke-width="1.200" d="M970 1042c8 2 12 7 11 12s-7 7-10 4-2-7 1-8 5 2 4 4M964 1048c2 4 3 8 3 13"/>
<path d="M1018 1047l16-12 4 2v27l-4 2-16-12 3-3.500zM1023 1050.500l9 7v-14z" fill="#1e8fe0" fill-rule="evenodd"/><path d="M1012 1044l3-2 7 5-3 3.500 3 3.500-7 5-3-2 5-6.500z" fill="#0f6cba"/>
<rect x="1056" y="1041" width="24" height="19" fill="#4d4d4d"/><rect x="1056" y="1041" width="24" height="4" fill="#a8a8a8"/>
<path class="i" stroke="#eee" stroke-width="1.600" d="M1060 1048l4 3.500-4 3.500"/><rect x="1067" y="1054.500" width="7" height="1.800" fill="#eee"/>
<rect x="1092" y="1030" width="35" height="40" rx="4" fill="#fff" opacity=".07"/>
<circle cx="1112" cy="1050" r="12" fill="#ea4335"/><path d="M1112 1050l-10.400 6a12 12 0 0 0 16.400 4.400z" fill="#34a853"/><path d="M1112 1050l6 10.400a12 12 0 0 0 4.400-16.400z" fill="#fbbc05"/><path d="M1112 1038a12 12 0 0 0-10.400 18l10.400-6z" fill="#ea4335"/><circle cx="1112" cy="1050" r="5.500" fill="#fff"/><circle cx="1112" cy="1050" r="4.200" fill="#4285f4"/>
<path d="M1145 1043l6-4 4 3-3 16-5 2z" fill="#f0506e"/><path d="M1155 1039l12 3-1 20-8 2-7-4z" fill="#1e88e5"/><path d="M1146 1046l3 10 4 3-5-1z" fill="#f59e2a"/>
<rect x="1150" y="1042" width="16" height="18" fill="#111"/><text x="1154" y="1048" font-size="8" font-weight="bold" fill="#fff">IJ</text><rect x="1152" y="1056" width="6" height="1.500" fill="#fff"/>
<g fill="#aaa"><rect x="1021" y="1066.500" width="6" height="2.500" rx="1.200"/><rect x="1065" y="1066.500" width="6" height="2.500" rx="1.200"/><rect x="1153" y="1066.500" width="6" height="2.500" rx="1.200"/><rect x="1104" y="1066.500" width="16" height="2.500" rx="1.200" fill="#d8a8e0"/></g>
<!-- tray -->
<path class="i" stroke="#eee" stroke-width="1.600" d="M1559 1053l5-5 5 5"/>
<rect x="1589" y="1043" width="13" height="14" rx="2.500" fill="#1e88e5"/><path d="M1592 1046l6 3 1 5-4-2z" fill="#cfe8ff"/>
<path d="M1621 1058h16v-10l-2-3-2 2h-6l-2-2-2 3z" fill="#565078"/><circle cx="1625.500" cy="1049" r="2" fill="none" stroke="#d0d0d0"/><circle cx="1632.500" cy="1049" r="2" fill="none" stroke="#d0d0d0"/>
<text x="1692.500" y="1050" font-size="13" fill="#f2f2f2" text-anchor="middle">中</text>
<rect x="1722" y="1044" width="14" height="13" rx="2" fill="#e8602a" transform="rotate(-8 1729 1050)"/><text x="1729" y="1050" font-size="11" font-weight="bold" fill="#fff" text-anchor="middle">S</text>
<path class="i" stroke="#e4e4e4" stroke-width="1.100" d="M1761 1043h11v11h-11zM1764 1058h6M1767 1054v4M1773 1051h2v-8h3v8h-3"/>
<path class="i" stroke="#e4e4e4" stroke-width="1.100" d="M1785 1048h3l4-3v12l-4-3h-3zM1795 1048c1 2 1 4 0 6M1798 1045c2 4 2 8 0 12"/>
<text x="1857" y="1043" font-size="12" fill="#e8e8e8" text-anchor="middle">15:43</text>
<text x="1872" y="1058.500" font-size="12" fill="#e8e8e8" text-anchor="end">2024/7/12</text>
<path class="i" stroke="#e4e4e4" stroke-width="1.200" d="M1881 1055c2-2 1-4 2-8a4 4 0 0 1 8 0c1 4 0 6 2 8zM1885 1055a2 2 0 0 0 4 0"/>
<!-- sougou bar -->
<rect x="1740" y="1001" width="174" height="25" fill="#323232"/>
<rect x="1715" y="997" width="26" height="27" rx="4" fill="#ec5a1e" transform="rotate(-10 1728 1010)"/>
<text x="0" y="0" font-size="24" font-weight="bold" fill="#fff" text-anchor="middle" transform="translate(1728 1010) rotate(-10) scale(1.250 1)">S</text>
<text x="1758" y="1012" font-size="14" font-weight="bold" fill="#eee" text-anchor="middle">中</text>
<circle cx="1779" cy="1009" r="1.800" fill="none" stroke="#eee"/><path class="i" stroke="#eee" stroke-width="1.400" d="M1787 1010l-1 5"/>
<path d="M1803 1005a3 3 0 0 1 6 0v6a3 3 0 0 1-6 0z" fill="#eee"/><path class="i" stroke="#eee" stroke-width="1.400" d="M1800 1011a6 6 0 0 0 12 0M1806 1017v2"/>
<rect x="1824" y="1006" width="14" height="11" rx="1" fill="none" stroke="#eee" stroke-width="1.300"/><path stroke="#eee" stroke-dasharray="1.300 1.300" d="M1826 1009.500h10M1826 1012h10"/>
<path d="M1847 1007l4-2 4 2 4-2 4 2-2 5-2-1v8h-8v-8l-2 1z" fill="#eee"/>
<rect x="1872" y="1006" width="14" height="11" rx="5" fill="#eee"/><path stroke="#323232" stroke-width="1.200" d="M1875 1011.500h4M1877 1009.500v4"/>
<g fill="#eee"><rect x="1896" y="1006" width="5" height="5" rx="1"/><rect x="1903" y="1006" width="5" height="5" rx="1"/><rect x="1896" y="1013" width="5" height="5" rx="1"/><rect x="1903" y="1013" width="5" height="5" rx="1"/></g>
<text x="1576" y="1032" font-size="25" fill="#fff" fill-opacity=".68" textLength="309" lengthAdjust="spacingAndGlyphs">掘金技术社区 @ 云层上的光</text>
</svg>
</body></html>
